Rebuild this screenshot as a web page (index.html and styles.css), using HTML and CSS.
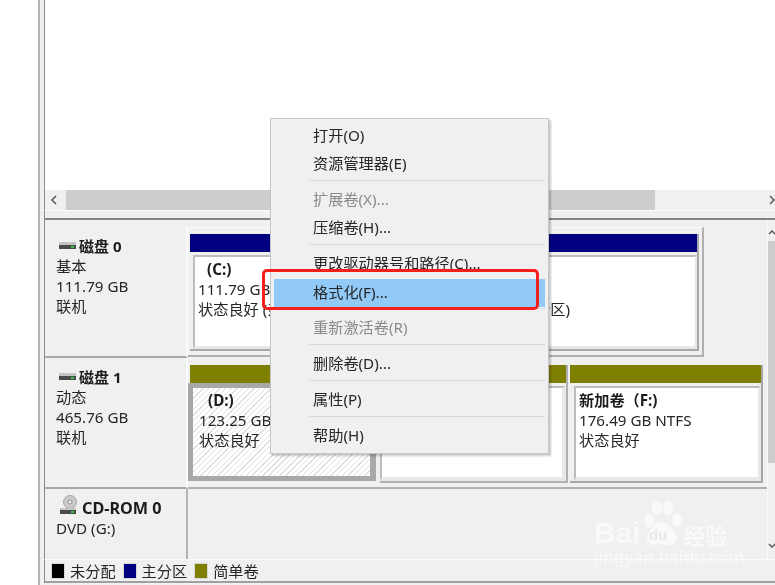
FILE: index.html
```html
<!DOCTYPE html>
<html lang="zh-CN">
<head>
<meta charset="utf-8">
<title>磁盘管理</title>
<link rel="stylesheet" href="styles.css">
</head>
<body>
<div class="window">
  <div class="list"></div>
  <div class="hscroll">
    <svg class="chev" width="8" height="10" viewBox="0 0 8 10"><path d="M6 1 2 5l4 4" fill="none" stroke="#555" stroke-width="1.5"/></svg>
    <div class="hthumb"></div>
    <svg class="chev-r" width="8" height="10" viewBox="0 0 8 10"><path d="M2 1l4 4-4 4" fill="none" stroke="#555" stroke-width="1.5"/></svg>
  </div>
  <div class="split"></div>
  <div class="main">
    <div class="disks">
      <div class="row row-a">
        <div class="label">
          <div class="disk-name">
            <svg class="drive" width="17" height="9" viewBox="0 0 17 9"><rect x="0" y="0" width="17" height="3" fill="#c4c4c4"/><rect x="0" y="3" width="17" height="4" fill="#4a4a4a"/><rect x="12" y="4" width="3" height="2" fill="#39c24a"/></svg>
            <b>磁盘 0</b>
          </div>
          <div>基本</div>
          <div>111.79 GB</div>
          <div>联机</div>
        </div>
        <div class="map map-top">
          <div class="vol vol-c">
            <div class="frame">
              <div class="bar navy"></div>
              <div class="body">
                <b class="vname">(C:)</b>
                <div>111.79 GB NTFS</div>
                <div class="nowrap">状态良好 (系统, 启动, 页面文件, 活动, 故障转储, 主分区)</div>
              </div>
            </div>
          </div>
        </div>
      </div>
      <div class="row row-a">
        <div class="label">
          <div class="disk-name">
            <svg class="drive" width="17" height="9" viewBox="0 0 17 9"><rect x="0" y="0" width="17" height="3" fill="#c4c4c4"/><rect x="0" y="3" width="17" height="4" fill="#4a4a4a"/><rect x="12" y="4" width="3" height="2" fill="#39c24a"/></svg>
            <b>磁盘 1</b>
          </div>
          <div>动态</div>
          <div>465.76 GB</div>
          <div>联机</div>
        </div>
        <div class="map map-split">
          <div class="vol vol-d">
            <div class="bar olive"></div>
            <div class="body hatch">
              <b class="vname">(D:)</b>
              <div>123.25 GB</div>
              <div>状态良好</div>
            </div>
          </div>
          <div class="vol vol-e">
            <div class="bar olive"></div>
            <div class="body"></div>
          </div>
          <div class="vol vol-f">
            <div class="bar olive"></div>
            <div class="body">
              <b>新加卷（F:)</b>
              <div>176.49 GB NTFS</div>
              <div>状态良好</div>
            </div>
          </div>
        </div>
      </div>
      <div class="row row-c">
        <div class="label">
          <div class="disk-name cd">
            <svg class="drive" width="19" height="20" viewBox="0 0 19 20"><circle cx="11" cy="7" r="6.5" fill="#c9c9c9" stroke="#a5a5a5"/><circle cx="11" cy="7" r="2" fill="#f4f4f4" stroke="#8e8e8e"/><rect x="1" y="13" width="16" height="2" fill="#c4c4c4"/><rect x="1" y="15" width="16" height="4" fill="#4a4a4a"/><rect x="12" y="16" width="3" height="2" fill="#39c24a"/></svg>
            <b>CD-ROM 0</b>
          </div>
          <div>DVD (G:)</div>
        </div>
        <div class="map"></div>
      </div>
    </div>
    <div class="vscroll">
      <svg class="vchev" width="8" height="8" viewBox="0 0 8 8"><path d="M1 6l3-3 3 3" fill="none" stroke="#555" stroke-width="1.4"/></svg>
      <div class="vthumb"></div>
      <div class="vtrack"></div>
      <svg class="vchev" width="8" height="8" viewBox="0 0 8 8"><path d="M1 2l3 3 3-3" fill="none" stroke="#555" stroke-width="1.4"/></svg>
    </div>
  </div>
  <div class="legend">
    <span class="swatch black"></span><span class="lg-text">未分配</span>
    <span class="swatch navy"></span><span class="lg-text">主分区</span>
    <span class="swatch olive"></span><span class="lg-text">简单卷</span>
  </div>
</div>

<div class="menu">
  <div class="item">打开(O)</div>
  <div class="item">资源管理器(E)</div>
  <div class="sep"></div>
  <div class="item off">扩展卷(X)...</div>
  <div class="item">压缩卷(H)...</div>
  <div class="sep"></div>
  <div class="item">更改驱动器号和路径(C)...</div>
  <div class="item hl">格式化(F)...</div>
  <div class="sep"></div>
  <div class="item off">重新激活卷(R)</div>
  <div class="sep"></div>
  <div class="item">删除卷(D)...</div>
  <div class="sep"></div>
  <div class="item">属性(P)</div>
  <div class="sep"></div>
  <div class="item">帮助(H)</div>
</div>
<div class="callout"></div>

<div class="mark">
  <div class="mark-top">
    <span class="mark-bai">Bai</span>
    <svg class="paw" width="42" height="48" viewBox="0 0 42 48"><g fill="#fff" fill-opacity=".6"><ellipse cx="8" cy="21" rx="5" ry="7"/><ellipse cx="16" cy="8" rx="5" ry="7"/><ellipse cx="27" cy="8" rx="5" ry="7"/><ellipse cx="36" cy="20" rx="5" ry="7"/><path d="M21 22c6 0 8 5 12 9 6 7 2 15-6 14-3 0-4-1-6-1s-4 1-7 1C6 45 3 37 9 31c4-4 6-9 12-9z"/></g></svg>
    <span class="mark-du">du</span>
    <span class="mark-cn">经验</span>
  </div>
  <div class="mark-url">jingyan.baidu.com</div>
</div>
</body>
</html>
```
FILE: styles.css
```css
* { box-sizing: border-box; }
html, body { margin: 0; height: 100%; overflow: hidden; background: #fff; }
body {
  font-family: "Noto Sans", "Noto Sans CJK SC", sans-serif;
  font-size: 15.2px;
  line-height: 20px;
  color: #262626;
  width: 775px;
  height: 585px;
  position: relative;
  filter: blur(.35px);
}
b { font-weight: 700; color: #1c1c1c; }

.window {
  margin-left: 38px;
  width: 745px;
  height: 585px;
  display: flex;
  flex-direction: column;
  background: #f0f0f0;
  border-left: 2px solid #b4b4b4;
}
.list {
  height: 190px;
  background: #fff;
  margin-left: 4px;
  border-left: 1px solid #8c8c8c;
}
.hscroll {
  height: 20px;
  margin-left: 4px;
  border-left: 1px solid #8c8c8c;
  background: #f0f0f0;
  display: flex;
  align-items: center;
  padding-left: 5px;
}
.hthumb { width: 589px; height: 20px; margin-left: 8px; background: #cdcdcd; flex: none; }
.chev { flex: none; }
.chev-r { flex: none; margin-left: 113px; }
.split {
  height: 10px;
  margin-left: 4px;
  border-left: 1px solid #8c8c8c;
  border-top: 1px solid #fafafa;
  border-bottom: 2px solid #858585;
  background: #f0f0f0;
}
.main {
  height: 339px;
  margin-left: 4px;
  border-left: 1px solid #8c8c8c;
  display: flex;
}
.disks { width: 722px; padding-top: 7px; flex: none; }
.row { display: flex; }
.row-a { height: 131px; }
.row-c { height: 71px; }
.label {
  width: 143px;
  flex: none;
  padding: 9px 0 0 11px;
  background: #f0f0f0;
  border-right: 2px solid #fafafa;
  border-bottom: 2px solid #a9a9a9;
}
.row-c .label { border-bottom: 0; padding-top: 3px; border-right-color: #b5b5b5; }
.disk-name { display: flex; align-items: flex-end; height: 20px; font-size: 15px; }
.disk-name .drive { margin: 0 3px 5px 3px; flex: none; }
.disk-name.cd { height: 26px; font-size: 16.2px; }
.disk-name.cd .drive { margin: 0 4px 3px 3px; }
.map { flex: 1; min-width: 0; }
.map-split { display: flex; border-bottom: 2px solid #b0b0b0; }

.vol { flex: none; overflow: hidden; }
.bar { height: 18px; }
.navy { background: #000080; }
.olive { background: #808000; }
.black { background: #000; }
.body { background: #fff; overflow: hidden; }
.vname { display: block; padding-left: 9px; }
.nowrap { white-space: nowrap; }

.vol-c {
  width: 516px;
  height: 130px;
  padding: 6px 3px 4px 2px;
  border-top: 1px solid #fafafa;
  border-right: 2px solid #b0b0b0;
  border-bottom: 2px solid #b0b0b0;
}
.frame { height: 117px; border-right: 2px solid #a8a8a8; border-bottom: 2px solid #a8a8a8; }
.vol-c .body {
  margin: 3px 0 0 3px;
  height: 94px;
  padding: 2px 0 0 3px;
  border-top: 2px solid #bdbdbd;
  border-left: 2px solid #bdbdbd;
  border-right: 2px solid #e8e8e8;
  border-bottom: 3px solid #e8e8e8;
}
.vol-d { width: 188px; height: 123px; padding: 7px 0 0 2px; }
.vol-d .bar { width: 186px; }
.vol-d .body {
  margin-left: -2px;
  width: 188px;
  height: 98px;
  border: 5px solid #a8a8a8;
  border-right-width: 6px;
  padding: 2px 0 0 6px;
  background: repeating-linear-gradient(135deg, #fff 0 3px, #dedede 3px 4px);
}
.vol-e {
  width: 188px;
  height: 118px;
  margin: 7px 0 0 4px;
  border-right: 2px solid #b0b0b0;
  border-bottom: 2px solid #b0b0b0;
}
.vol-e .body {
  height: 95px;
  margin-top: 3px;
  border-top: 2px solid #bdbdbd;
  border-left: 2px solid #bdbdbd;
  border-right: 4px solid #e8e8e8;
  border-bottom: 4px solid #e8e8e8;
}
.vol-f {
  width: 193px;
  height: 118px;
  margin: 7px 0 0 2px;
  border-right: 2px solid #a8a8a8;
  border-bottom: 2px solid #a8a8a8;
}
.vol-f .body {
  margin: 3px 0 0 4px;
  height: 95px;
  border-top: 2px solid #bdbdbd;
  border-left: 2px solid #bdbdbd;
  border-right: 3px solid #e8e8e8;
  border-bottom: 4px solid #e8e8e8;
  padding: 2px 0 0 3px;
}

.vscroll {
  flex: none;
  width: 10px;
  display: flex;
  flex-direction: column;
  align-items: flex-start;
  padding-top: 8px;
  border-left: 1px solid #fafafa;
}
.vchev { flex: none; }
.vthumb { width: 9px; height: 222px; margin-top: 5px; background: #cdcdcd; }
.vtrack { height: 79px; }
.legend {
  height: 24px;
  margin-left: 4px;
  border-left: 1px solid #8c8c8c;
  border-top: 1px solid #fafafa;
  border-bottom: 2px solid #a0a0a0;
  display: flex;
  align-items: center;
  padding-left: 6px;
  margin-bottom: 2px;
}
.swatch { width: 14px; height: 16px; flex: none; border: 1px solid #d8d8d8; margin-right: 5px; }
.lg-text { margin-right: 7px; white-space: nowrap; }

/* context menu, over the page */
.menu {
  position: absolute;
  left: 270px;
  top: 118px;
  width: 279px;
  height: 336px;
  padding: 4px 3px;
  background: #f0f0f0;
  border: 1px solid #c6c6c6;
  box-shadow: 2px 2px 2px rgba(0,0,0,.22);
}
.item { height: 28px; line-height: 25px; padding-left: 39px; color: #262626; white-space: nowrap; }
.item.off { color: #8a8a8a; }
.item.hl { background: #91c9f7; line-height: 26px; }
.sep { height: 8px; margin-left: 35px; padding-top: 1px; }
.sep::before { content: ""; display: block; height: 1px; background: #d7d7d7; }

.callout {
  position: absolute;
  left: 262px;
  top: 269px;
  width: 277px;
  height: 41px;
  border: 3px solid #f3201c;
  border-radius: 5px;
}

/* watermark, over the page */
.mark {
  position: absolute;
  left: 594px;
  top: 500px;
  width: 140px;
  color: rgba(255,255,255,.62);
}
.mark-top { position: relative; height: 48px; display: flex; align-items: flex-end; }
.mark-bai { font: 700 30px/30px "Liberation Sans", sans-serif; width: 47px; flex: none; }
.paw { flex: none; }
.mark-du {
  position: absolute;
  left: 55px;
  bottom: 5px;
  font: 700 15px/16px "Liberation Sans", sans-serif;
  color: #e8e8e8;
}
.mark-cn { font: 700 22px/24px "Noto Sans CJK SC", sans-serif; white-space: nowrap; margin-bottom: 2px; }
.mark-url { font: 400 17px/18px "Noto Sans", sans-serif; white-space: nowrap; letter-spacing: .2px; }
```
